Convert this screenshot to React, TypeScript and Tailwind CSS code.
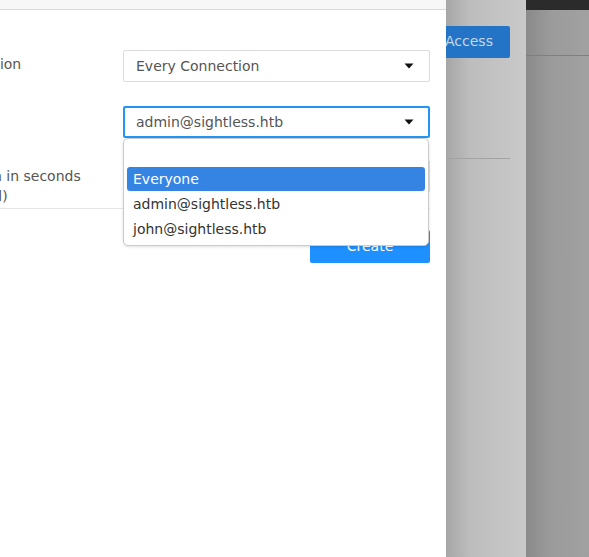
export default function App() {
   return (
      <div className="flex w-[589px] h-[557px] overflow-hidden font-['DejaVu_Sans',sans-serif] text-[14px]">
         <ShareModal />
         <BackdropLeft />
         <BackdropRight />
      </div>
   );
}

function Caret() {
   return (
      <svg width="10" height="6" viewBox="0 0 10 6" className="shrink-0">
         <path d="M0.5 0.5 L9.5 0.5 L5 5.5 Z" fill="#111" />
      </svg>
   );
}

function ShareModal() {
   return (
      <div className="relative z-10 w-[446px] shrink-0 h-full bg-white flex flex-col">
         <div className="h-[10px] bg-[#f7f7f7] border-b border-[#d9d9d9]" />

         {/* connection */}
         <div className="flex items-center mt-[40px] h-[32px]">
            <div className="-ml-[58px] w-[181px] shrink-0 text-[#555] whitespace-nowrap mb-[4px]">
               Connection
            </div>
            <div className="w-[307px] h-[32px] border border-[#dcdcdc] rounded-[2px] flex items-center justify-between pl-[12px] pr-[15px] text-[#555]">
               <span>Every Connection</span>
               <Caret />
            </div>
         </div>

         {/* user */}
         <div className="flex items-center mt-[24px] h-[32px]">
            <div className="-ml-[58px] w-[181px] shrink-0 text-[#555] whitespace-nowrap overflow-hidden">
               <span className="invisible">User</span>
            </div>
            <div className="w-[307px] h-[32px] border-2 border-[#2196f3] rounded-[2px] flex items-center justify-between pl-[11px] pr-[14px] text-[#555]">
               <span>admin@sightless.htb</span>
               <Caret />
            </div>
         </div>

         {/* expiry */}
         <div className="flex items-start mt-[22px]">
            <div className="w-[123px] shrink-0 text-[#555] whitespace-nowrap leading-[20px] mt-[6px] flex flex-col">
               <span className="-ml-[59px]">Duration in seconds</span>
               <span className="-ml-[60px]">(optional)</span>
            </div>
            <div className="w-[307px] h-[33px] border border-[#dcdcdc] rounded-[2px]" />
         </div>

         <div className="mt-[2px] w-[430px] border-t border-[#e6e6e6]" />

         <div className="flex mt-[21px] pl-[310px]">
            <button className="w-[120px] h-[33px] bg-[#1e90ff] text-white rounded-[2px]">
               Create
            </button>
         </div>

         {/* open dropdown */}
         <div className="absolute left-[123px] top-[138px] w-[306px] h-[108px] bg-white border border-[#cacaca] rounded-[5px] shadow-[0_1px_3px_rgba(0,0,0,0.12)] flex flex-col px-[3px] pt-[28px]">
            <div className="h-[25px]">
               <div className="h-[24px] rounded-[3px] bg-[#3584e4] text-white flex items-center px-[6px]">
                  Everyone
               </div>
            </div>
            <div className="h-[25px] flex items-center px-[6px] text-[#333]">
               admin@sightless.htb
            </div>
            <div className="h-[25px] flex items-center px-[6px] text-[#333]">
               john@sightless.htb
            </div>
         </div>
      </div>
   );
}

function BackdropLeft() {
   return (
      <div className="w-[80px] shrink-0 h-full bg-[linear-gradient(90deg,#a6a6a6_0%,#bdbdbd_30%,#c9c9c9_100%)] flex flex-col">
         <div className="mt-[26px] -ml-[6px] w-[70px] h-[32px] bg-[#2374c6] rounded-r-[2px] flex items-center pl-[5px] pb-[2px] text-[#c9d6e6]">
            Access
         </div>
         <div className="mt-[100px] w-[64px] border-t border-[#a3a3a3]" />
      </div>
   );
}

function BackdropRight() {
   return (
      <div className="flex-1 h-full flex flex-col bg-[linear-gradient(90deg,#8a8a8a_0%,#9b9b9b_40%,#a1a1a1_100%)]">
         <div className="h-[10px] bg-[#2b2b2b]" />
         <div className="mt-[45px] border-t border-[#7f7f7f]" />
      </div>
   );
}
